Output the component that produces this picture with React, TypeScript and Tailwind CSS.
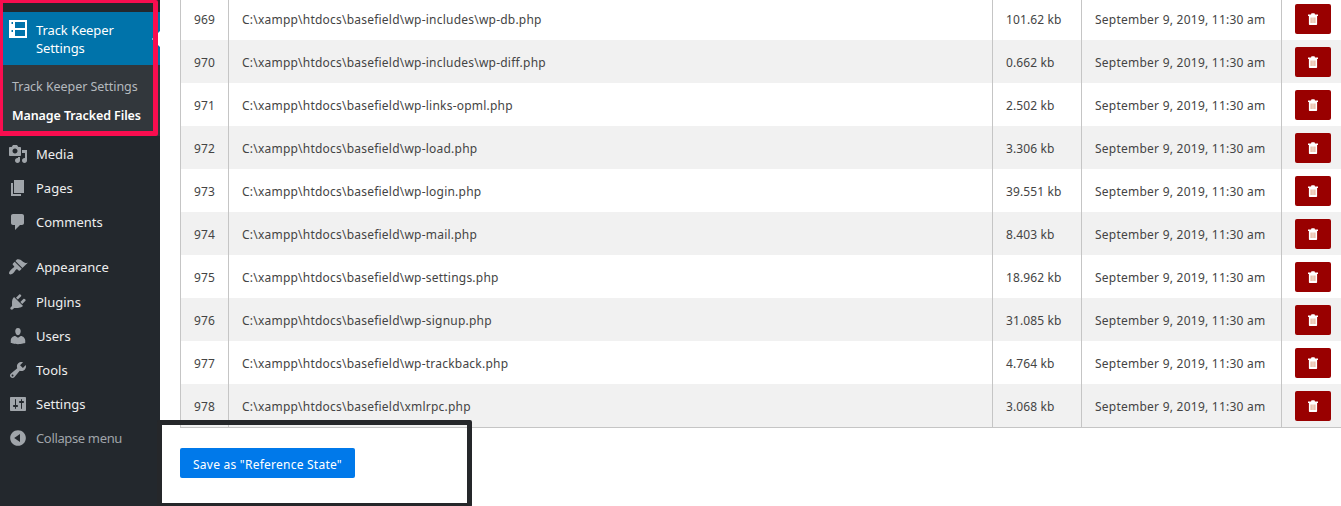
import type { ReactNode } from 'react';

const files = [
  { id: 969, path: 'wp-includes\\wp-db.php', size: '101.62 kb' },
  { id: 970, path: 'wp-includes\\wp-diff.php', size: '0.662 kb' },
  { id: 971, path: 'wp-links-opml.php', size: '2.502 kb' },
  { id: 972, path: 'wp-load.php', size: '3.306 kb' },
  { id: 973, path: 'wp-login.php', size: '39.551 kb' },
  { id: 974, path: 'wp-mail.php', size: '8.403 kb' },
  { id: 975, path: 'wp-settings.php', size: '18.962 kb' },
  { id: 976, path: 'wp-signup.php', size: '31.085 kb' },
  { id: 977, path: 'wp-trackback.php', size: '4.764 kb' },
  { id: 978, path: 'xmlrpc.php', size: '3.068 kb' },
];

const icons = {
  media:
    'M13 11V4c0-.55-.45-1-1-1h-1.67L9 1H5L3.67 3H2c-.55 0-1 .45-1 1v7c0 .55.45 1 1 1h10c.55 0 1-.45 1-1zM7 4.5c1.38 0 2.5 1.12 2.5 2.5S8.38 9.5 7 9.5 4.5 8.38 4.5 7 5.62 4.5 7 4.5zM14 6h5v10.5c0 1.38-1.12 2.5-2.5 2.5S14 17.88 14 16.5s1.12-2.5 2.5-2.5c.17 0 .34.02.5.05V9h-3V6zm-4 8.05V13h2v3.5c0 1.38-1.12 2.5-2.5 2.5S7 17.88 7 16.5 8.12 14 9.5 14c.17 0 .34.02.5.05z',
  pages: 'M6 15V2h10v13H6zm-1 1h8v2H3V5h2v11z',
  comments:
    'M5 2h9c1.1 0 2 .9 2 2v7c0 1.1-.9 2-2 2h-2l-5 5v-5H5c-1.1 0-2-.9-2-2V4c0-1.1.9-2 2-2z',
  appearance:
    'M14.48 11.06L7.41 3.99l1.5-1.5c.5-.56 2.3-.47 3.51.32 1.21.8 1.43 1.28 2.91 2.1 1.18.64 2.45 1.26 4.45.85zm-.71.71L6.7 4.7 4.93 6.47c-.39.39-.39 1.02 0 1.41l1.06 1.06c.39.39.39 1.03 0 1.42-.6.6-1.43 1.11-2.21 1.69-.35.26-.7.53-1.01.84C1.43 14.23.4 16.08 1.4 17.07c.99 1 2.84-.03 4.18-1.36.31-.31.58-.66.85-1.02.57-.78 1.08-1.61 1.69-2.21.39-.39 1.02-.39 1.41 0l1.06 1.06c.39.39 1.02.39 1.41 0z',
  plugins:
    'M13.11 4.36L9.87 7.6 8 5.73l3.24-3.24c.35-.34 1.05-.2 1.56.32.52.51.66 1.21.31 1.55zm-8 1.77l.91-1.12 9.01 9.01-1.19.84c-.71.71-2.63 1.16-3.82 1.16H6.14L4.9 17.26c-.59.59-1.54.59-2.12 0-.59-.58-.59-1.53 0-2.12l1.24-1.24v-3.88c0-1.13.4-3.19 1.09-3.89zm7.26 3.97l3.24-3.24c.34-.35 1.04-.21 1.55.31.52.51.66 1.21.31 1.55l-3.24 3.25z',
  users:
    'M10 9.25c-2.27 0-2.73-3.44-2.73-3.44C7 4.02 7.82 2 9.97 2c2.16 0 2.98 2.02 2.71 3.81 0 0-.41 3.44-2.68 3.44zm0 2.57L12.72 10c2.39 0 4.52 2.33 4.52 4.53v2.49s-3.65 1.13-7.24 1.13c-3.65 0-7.24-1.13-7.24-1.13v-2.49c0-2.25 1.94-4.48 4.47-4.48z',
  tools:
    'M16.68 9.77c-1.34 1.34-3.3 1.67-4.95.99l-5.41 6.52c-.99.99-2.59.99-3.58 0s-.99-2.59 0-3.57l6.52-5.42c-.68-1.65-.35-3.61.99-4.95 1.28-1.28 3.12-1.62 4.72-1.06l-2.89 2.89 2.82 2.82 2.86-2.87c.53 1.58.18 3.39-1.08 4.65zM3.81 16.21c.4.39 1.04.39 1.43 0 .4-.4.4-1.04 0-1.43-.39-.4-1.03-.4-1.43 0-.39.39-.39 1.03 0 1.43z',
  settings:
    'M18 16V4c0-.55-.45-1-1-1H3c-.55 0-1 .45-1 1v12c0 .55.45 1 1 1h14c.55 0 1-.45 1-1zM8 11h1c.55 0 1 .45 1 1s-.45 1-1 1H8v1.5c0 .28-.22.5-.5.5s-.5-.22-.5-.5V13H6c-.55 0-1-.45-1-1s.45-1 1-1h1V5.5c0-.28.22-.5.5-.5s.5.22.5.5V11zm5-2h-1c-.55 0-1-.45-1-1s.45-1 1-1h1V5.5c0-.28.22-.5.5-.5s.5.22.5.5V7h1c.55 0 1 .45 1 1s-.45 1-1 1h-1v5.5c0 .28-.22.5-.5.5s-.5-.22-.5-.5V9z',
  collapse:
    'M10 2.16c4.33 0 7.84 3.51 7.84 7.84s-3.51 7.84-7.84 7.84S2.16 14.33 2.16 10 5.71 2.16 10 2.16zm2 11.72V6.12L6.18 9.97z',
};

function MenuItem({ icon, className = 'text-[#eeeeee]', children }: { icon: string; className?: string; children: ReactNode }) {
  return (
    <li className={`flex h-[34px] items-center gap-2 pl-2 text-[13px] leading-[18px] ${className}`}>
      <svg viewBox="0 0 20 20" className="-mt-px size-5 shrink-0 fill-[#a0a5aa]" fillRule="evenodd">
        <path d={icon} />
      </svg>
      <span>{children}</span>
    </li>
  );
}

function TrashIcon() {
  return (
    <svg viewBox="0 0 10 12" className="h-3 w-2.5">
      <path fill="#ffffff" d="M0 1.500h3L3.500.3h3L7 1.500h3V3H0zM.9 3h8.200v8c0 .6-.4 1-1 1H1.900c-.6 0-1-.4-1-1z" />
      <path fill="#dfa080" d="M2.600 4.500h1v5.500h-1zM4.500 4.500h1v5.500h-1zM6.400 4.500h1v5.500h-1z" />
    </svg>
  );
}

function Sidebar() {
  return (
    <nav className="relative h-full w-40 shrink-0 bg-[#23282d] pt-3">
      <div className="relative flex h-[53px] gap-2 bg-[#0073aa] pt-[9px] pl-2 text-[13px] leading-[18px] text-white">
        <svg viewBox="0 0 20 20" className="-mt-px size-5 shrink-0">
          <path
            fill="white"
            fillRule="evenodd"
            d="M1 0h18v18H1zM7 2v6h10V2zM7 10v6h10v-6zM3.500 2v2h1.500V2zM3.500 10v2h1.500v-2z"
          />
        </svg>
        <span className="tracking-[-0.1px]">
          Track Keeper
          <br />
          Settings
        </span>
        <span className="absolute top-[19px] right-0 size-0 border-y-8 border-r-8 border-y-transparent border-r-white" />
      </div>
      <ul className="flex h-[71px] flex-col gap-[11px] bg-[#32373c] pt-[13px] pl-3 text-[12.5px] leading-[18px]">
        <li className="tracking-[-0.05px] text-[#b4b9be]">Track Keeper Settings</li>
        <li className="font-semibold tracking-[-0.1px] text-white">Manage Tracked Files</li>
      </ul>
      <ul className="pt-px">
        <MenuItem icon={icons.media}>Media</MenuItem>
        <MenuItem icon={icons.pages}>Pages</MenuItem>
        <MenuItem icon={icons.comments}>Comments</MenuItem>
      </ul>
      <ul className="pt-[11px]">
        <MenuItem icon={icons.appearance}>Appearance</MenuItem>
      </ul>
      <ul className="pt-px">
        <MenuItem icon={icons.plugins}>Plugins</MenuItem>
        <MenuItem icon={icons.users}>Users</MenuItem>
        <MenuItem icon={icons.tools}>Tools</MenuItem>
        <MenuItem icon={icons.settings}>Settings</MenuItem>
        <MenuItem icon={icons.collapse} className="tracking-[-0.35px] text-[#a0a5aa]">
          Collapse menu
        </MenuItem>
      </ul>
      <div className="absolute top-0 left-0 h-[136px] w-[158px] rounded-r-[2px] border-t-[3px] border-r-[5px] border-b-[5px] border-l-[3px] border-[#f90d4f]" />
    </nav>
  );
}

export default function App() {
  return (
    <div className="relative flex h-[506px] w-[1341px] overflow-hidden bg-white font-['Noto_Sans',sans-serif]">
      <Sidebar />
      <main className="min-w-0 flex-1 pl-5">
        <div className="-mt-[3px] w-[1161px] border-b border-l border-[#c5c5c5] text-[12px] text-[#444444]">
          {files.map((file) => (
            <div
              key={file.id}
              className="grid h-[43px] grid-cols-[48px_764px_89px_200px_60px] items-center odd:bg-white even:bg-[#f1f1f1]"
            >
              <div className="flex h-full items-center border-r border-[#c5c5c5] pt-0.5 pl-[13px] tracking-[0.15px]">
                {file.id}
              </div>
              <div className="flex h-full items-center border-r border-[#c5c5c5] pt-0.5 pl-[13px] tracking-[0.22px]">
                {'C:\\xampp\\htdocs\\basefield\\' + file.path}
              </div>
              <div className="flex h-full items-center border-r border-[#c5c5c5] pt-0.5 pl-[13px] tracking-[0.12px]">
                {file.size}
              </div>
              <div className="flex h-full items-center border-r border-[#c5c5c5] pt-0.5 pl-[13px] tracking-[0.24px]">
                September 9, 2019, 11:30 am
              </div>
              <div className="flex h-full items-center pl-[13px]">
                <button
                  aria-label="Delete"
                  className="flex h-[30px] w-9 items-center justify-center rounded-[2px] bg-[#990000]"
                >
                  <TrashIcon />
                </button>
              </div>
            </div>
          ))}
        </div>
        <button className="mt-5 flex h-[30px] w-[175px] items-center rounded-[2px] bg-[#0079ea] pt-[3px] pl-[13px] text-[12px] tracking-[0.24px] text-white">
          Save as "Reference State"
        </button>
      </main>
      <div className="absolute top-[420px] left-[157px] h-[87px] w-[315px] rounded-[2px] border-t-[5px] border-r-[5px] border-b-4 border-l-[5px] border-[#25272a]" />
    </div>
  );
}
